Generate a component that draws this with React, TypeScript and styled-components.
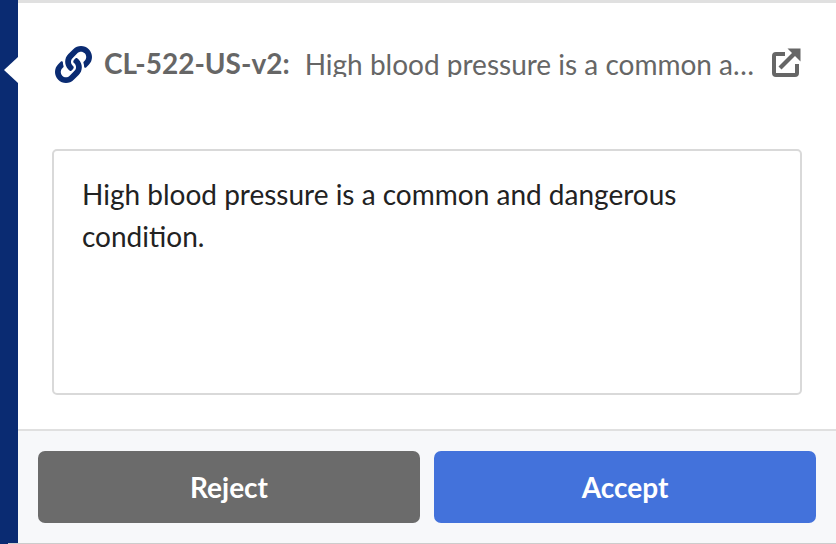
import React from "react";
import styled, { createGlobalStyle } from "styled-components";

const Global = createGlobalStyle`
  html, body { margin: 0; padding: 0; background: #fff; }
  body { font-family: Lato, "Liberation Sans", sans-serif; }
`;

const Page = styled.div`
  width: 836px;
  height: 544px;
  display: flex;
  overflow: hidden;
  background: #fff;
  position: relative;

  &::before,
  &::after {
    content: "";
    position: absolute;
    left: 8px;
    right: 0;
  }
  &::before {
    top: 0;
    height: 3px;
    background: #e0e0e0;
  }
  &::after {
    bottom: 0;
    height: 1px;
    background: #ccc;
  }
`;

const Rail = styled.div`
  width: 18px;
  flex: none;
  background: #0a2b72;
  position: relative;
`;

const Notch = styled.div`
  position: absolute;
  left: 4px;
  top: 57px;
  width: 0;
  height: 0;
  border-top: 13.5px solid transparent;
  border-bottom: 13.5px solid transparent;
  border-right: 14px solid #fff;
`;

const Main = styled.div`
  flex: 1;
  min-width: 0;
  display: flex;
  flex-direction: column;
  padding-top: 3px;
`;

const Body = styled.div`
  flex: 1;
  min-height: 0;
  padding: 0 34px;
  display: flex;
  flex-direction: column;
`;

const Header = styled.div`
  height: 146px;
  flex: none;
  display: flex;
  align-items: flex-start;
  padding-top: 43px;
  box-sizing: border-box;
  color: #666;
  font-size: 28px;
  line-height: 34px;
`;

const LinkIcon = styled.svg`
  width: 37px;
  height: 37px;
  flex: none;
  margin: 0 12px 0 3px;
  fill: #0a2b72;
`;

const Code = styled.span`
  font-weight: 700;
  white-space: nowrap;
  margin-right: 15px;
`;

const Title = styled.span`
  white-space: nowrap;
  flex: none;
  width: 453px;
  height: 30px;
  margin-top: 1px;
  overflow: hidden;
  text-overflow: ellipsis;
`;

const OpenIcon = styled.svg`
  width: 29px;
  height: 29px;
  flex: none;
  margin: 2px 0 0 14px;
  fill: none;
  stroke: #666;
`;

const TextBox = styled.div`
  height: 246px;
  box-sizing: border-box;
  border: 2px solid #d9d9d9;
  border-radius: 5px;
  padding: 22px 28px;
  color: #222;
  font-size: 28px;
  line-height: 42px;
`;

const Footer = styled.div`
  height: 115px;
  flex: none;
  box-sizing: border-box;
  background: #f7f8fa;
  border-top: 2px solid #e0e0e0;
  padding: 20px 20px 21px;
  display: grid;
  grid-template-columns: 1fr 1fr;
  gap: 14px;
`;

const ActionButton = styled.button<{ $tone: string }>`
  border: 0;
  border-radius: 7px;
  background: ${(p) => p.$tone};
  color: #fff;
  font-family: inherit;
  font-size: 28px;
  font-weight: 700;
  padding: 0;
`;

export default function App() {
  return (
    <Page>
      <Global />
      <Rail>
        <Notch />
      </Rail>
      <Main>
        <Body>
          <Header>
            <LinkIcon viewBox="0 0 512 512">
              <path d="M326.612 185.391c59.747 59.809 58.927 155.698.36 214.59-.11.12-.24.25-.36.37l-67.2 67.2c-59.27 59.27-155.699 59.262-214.96 0-59.27-59.26-59.27-155.7 0-214.96l37.106-37.106c9.84-9.84 26.786-3.3 27.294 10.606.648 17.722 3.826 35.527 9.69 52.721 1.986 5.822.567 12.262-3.783 16.612l-13.087 13.087c-28.026 28.026-28.905 73.66-1.155 101.96 28.024 28.579 74.086 28.749 102.325.51l67.2-67.19c28.191-28.191 28.073-73.757 0-101.83-3.701-3.694-7.429-6.564-10.341-8.569a16.037 16.037 0 0 1-6.947-12.606c-.396-10.567 3.348-21.456 11.698-29.806l21.054-21.055c5.521-5.521 14.182-6.199 20.584-1.731a152.482 152.482 0 0 1 20.522 17.197zM467.547 44.449c-59.261-59.262-155.69-59.27-214.96 0l-67.2 67.2c-.12.12-.25.25-.36.37-58.566 58.892-59.387 154.781.36 214.59a152.454 152.454 0 0 0 20.521 17.196c6.402 4.468 15.064 3.789 20.584-1.731l21.054-21.055c8.35-8.35 12.094-19.239 11.698-29.806a16.037 16.037 0 0 0-6.947-12.606c-2.912-2.005-6.64-4.875-10.341-8.569-28.073-28.073-28.191-73.639 0-101.83l67.2-67.19c28.239-28.239 74.3-28.069 102.325.51 27.75 28.3 26.872 73.934-1.155 101.96l-13.087 13.087c-4.35 4.35-5.769 10.79-3.783 16.612 5.864 17.194 9.042 34.999 9.69 52.721.509 13.906 17.454 20.446 27.294 10.606l37.106-37.106c59.271-59.259 59.271-155.699.001-214.959z" />
            </LinkIcon>
            <Code>CL-522-US-v2:</Code>
            <Title>High blood pressure is a common and dangerous condition.</Title>
            <OpenIcon viewBox="0 0 29 29">
              <path d="M13 6H4a2 2 0 0 0-2 2v17a2 2 0 0 0 2 2h19a2 2 0 0 0 2-2v-9" strokeWidth="4" />
              <path d="M8 20L22 6" strokeWidth="4.2" />
              <path d="M15.5 0.4h13V13.4z" fill="#666" stroke="none" />
            </OpenIcon>
          </Header>
          <TextBox>High blood pressure is a common and dangerous condition.</TextBox>
        </Body>
        <Footer>
          <ActionButton $tone="#6b6b6b">Reject</ActionButton>
          <ActionButton $tone="#4372db">Accept</ActionButton>
        </Footer>
      </Main>
    </Page>
  );
}
